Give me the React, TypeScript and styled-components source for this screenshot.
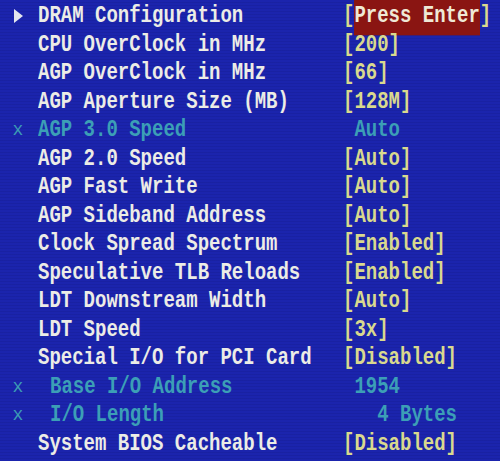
import styled, { createGlobalStyle } from 'styled-components';

// BIOS "Advanced Chipset" style page, rows drawn as a fixed-width grid
const GlobalStyle = createGlobalStyle`
	html, body {
		margin: 0;
		padding: 0;
		background: #1b24ad;
	}
`;

type Kind = 'normal' | 'disabled' | 'sub' | 'menu';

interface Item {
	label: string;
	value: string;
	kind?: Kind;
}

const items: Item[] = [
	{ label: 'DRAM Configuration', value: 'Press Enter', kind: 'menu' },
	{ label: 'CPU OverClock in MHz', value: '[200]' },
	{ label: 'AGP OverClock in MHz', value: '[66]' },
	{ label: 'AGP Aperture Size (MB)', value: '[128M]' },
	{ label: 'AGP 3.0 Speed', value: ' Auto', kind: 'disabled' },
	{ label: 'AGP 2.0 Speed', value: '[Auto]' },
	{ label: 'AGP Fast Write', value: '[Auto]' },
	{ label: 'AGP Sideband Address', value: '[Auto]' },
	{ label: 'Clock Spread Spectrum', value: '[Enabled]' },
	{ label: 'Speculative TLB Reloads', value: '[Enabled]' },
	{ label: 'LDT Downstream Width', value: '[Auto]' },
	{ label: 'LDT Speed', value: '[3x]' },
	{ label: 'Special I/O for PCI Card', value: '[Disabled]' },
	{ label: 'Base I/O Address', value: ' 1954', kind: 'sub' },
	{ label: 'I/O Length', value: '   4 Bytes', kind: 'sub' },
	{ label: 'System BIOS Cacheable', value: '[Disabled]' },
];

export default function App() {
	return (
		<>
			<GlobalStyle />
			<Screen>
				{items.map((item) => {
					const kind = item.kind ?? 'normal';
					const dim = kind === 'disabled' || kind === 'sub';
					return (
						<Row key={item.label}>
							<Marker>
								{kind === 'menu' && (
									<svg width="9" height="14" viewBox="0 0 9 14">
										<polygon points="0,0 9,7 0,14" fill="#e4e6ee" />
									</svg>
								)}
								{dim && <Cross>x</Cross>}
							</Marker>
							<Label $dim={dim} $indent={kind === 'sub'}>
								<Glyphs>{item.label}</Glyphs>
							</Label>
							<Value $dim={dim}>
								{kind === 'menu' ? (
									<Glyphs>
										[<Highlight>Press Enter</Highlight>]
									</Glyphs>
								) : (
									<Glyphs>{item.value}</Glyphs>
								)}
							</Value>
						</Row>
					);
				})}
			</Screen>
		</>
	);
}

const Screen = styled.div`
	width: 500px;
	height: 461px;
	box-sizing: border-box;
	padding-top: 2px;
	display: flex;
	flex-direction: column;
	background: #1b24ad repeating-linear-gradient(
		to bottom,
		rgba(255, 255, 255, 0) 0px,
		rgba(255, 255, 255, 0) 2px,
		rgba(0, 0, 40, 0.08) 2px,
		rgba(0, 0, 40, 0.08) 3px
	);
	font-family: 'Liberation Mono', 'DejaVu Sans Mono', monospace;
	font-weight: bold;
	font-size: 19px;
	overflow: hidden;
`;

const Row = styled.div`
	height: 28.5px;
	display: grid;
	grid-template-columns: 38px 305px 1fr;
	align-items: center;
	white-space: pre;
`;

const Marker = styled.div`
	display: flex;
	justify-content: center;
	align-items: center;
	padding-right: 2px;
`;

const Cross = styled.span`
	color: #3c9cb4;
	font-weight: normal;
	font-size: 18px;
	line-height: 1;
`;

const Glyphs = styled.span`
	display: inline-block;
	transform: scaleY(1.3);
	line-height: 1;
`;

const Label = styled.div<{ $dim: boolean; $indent: boolean }>`
	color: ${(p) => (p.$dim ? '#3c9fb6' : '#ecece6')};
	padding-left: ${(p) => (p.$indent ? '12px' : '0')};
`;

const Value = styled.div<{ $dim: boolean }>`
	color: ${(p) => (p.$dim ? '#3c9fb6' : '#d9d98e')};
`;

const Highlight = styled.span`
	background: #8a1512;
	color: #efe9d6;
	padding: 4px 0 4px;
`;
